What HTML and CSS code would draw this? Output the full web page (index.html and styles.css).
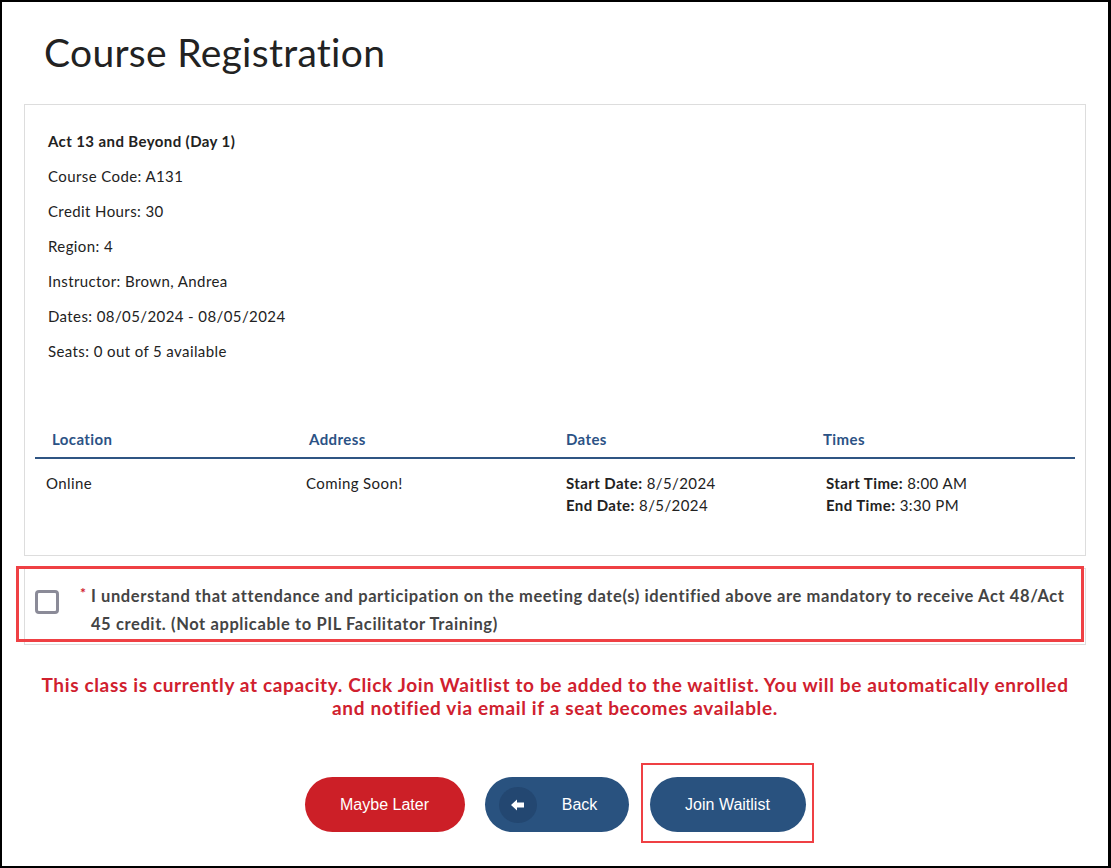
FILE: index.html
```html
<!DOCTYPE html>
<html lang="en">
<head>
  <meta charset="UTF-8">
  <meta name="viewport" content="width=device-width, initial-scale=1.0">
  <title>Course Registration</title>
  <link rel="stylesheet" href="styles.css">
</head>
<body>
  <div class="page">
    <h1>Course Registration</h1>

    <div class="card">
      <div class="info">
        <p class="course-name">Act 13 and Beyond (Day 1)</p>
        <p>Course Code: A131</p>
        <p>Credit Hours: 30</p>
        <p>Region: 4</p>
        <p>Instructor: Brown, Andrea</p>
        <p>Dates: 08/05/2024 - 08/05/2024</p>
        <p>Seats: 0 out of 5 available</p>
      </div>

      <table class="sessions">
        <colgroup>
          <col class="col">
          <col class="col">
          <col class="col">
          <col>
        </colgroup>
        <thead>
          <tr>
            <th>Location</th>
            <th>Address</th>
            <th>Dates</th>
            <th>Times</th>
          </tr>
        </thead>
        <tbody>
          <tr>
            <td>Online</td>
            <td>Coming Soon!</td>
            <td><b>Start Date:</b> 8/5/2024<br><b>End Date:</b> 8/5/2024</td>
            <td><b>Start Time:</b> 8:00 AM<br><b>End Time:</b> 3:30 PM</td>
          </tr>
        </tbody>
      </table>
    </div>

    <div class="agree">
      <label class="agree-row">
        <input type="checkbox" class="agree-check">
        <span class="req">*</span>
        <span class="agree-text">I understand that attendance and participation on the meeting date(s) identified above are mandatory to receive Act 48/Act 45 credit. (Not applicable to PIL Facilitator Training)</span>
      </label>
    </div>

    <p class="capacity">This class is currently at capacity. Click Join Waitlist to be added to the waitlist. You will be automatically enrolled and notified via email if a seat becomes available.</p>

    <div class="actions">
      <button class="btn btn-red">Maybe Later</button>
      <button class="btn btn-blue btn-back">
        <span class="back-icon">
          <svg width="14" height="12" viewBox="0 0 14 12"><path d="M0 6 L6 0.5 L6 3.5 L13 3.5 L13 8.5 L6 8.5 L6 11.5 Z" fill="#fff"/></svg>
        </span>
        <span class="back-label">Back</span>
      </button>
      <span class="focus-wrap">
        <button class="btn btn-blue">Join Waitlist</button>
      </span>
    </div>
  </div>
</body>
</html>
```

FILE: styles.css
```css
* { box-sizing: border-box; }
body { margin: 0; font-family: Lato, "Open Sans", Arial, sans-serif; color: #222; background: #fff; }
.page { height: 868px; border: 2px solid #000; border-right-width: 3px; padding: 0 22px; }

h1 { margin: 0; padding: 26px 0 0 20px; font-size: 39px; font-weight: 400; line-height: 48px; color: #222; letter-spacing: 0.3px; }

.card { margin-top: 28px; border: 1px solid #ddd; padding: 26px 10px 39px; }
.info { padding-left: 13px; }
.info p { margin: 0 0 15px; font-size: 15px; line-height: 20px; letter-spacing: 0.4px; }
.info .course-name { font-weight: 700; }
.info p:last-child { margin-bottom: 0; }

.sessions { width: 100%; margin-top: 68px; border-collapse: collapse; table-layout: fixed; font-size: 15px; letter-spacing: 0.4px; }
.sessions .col { width: 257px; }
.sessions th { text-align: left; color: #2b5285; font-weight: 700; padding: 0 0 8px 17px; border-bottom: 2px solid #2f5583; line-height: 20px; }
.sessions td { vertical-align: top; padding: 13px 0 0 11px; line-height: 22px; }
.sessions td:nth-child(2) { padding-left: 14px; }
.sessions td:nth-child(3) { padding-left: 17px; }
.sessions td:nth-child(4) { padding-left: 20px; }

.agree { position: relative; margin-top: 12px; border: 1px solid #ddd; padding: 13px 18px 6px 10px; }
.agree::after { content: ""; position: absolute; left: -9px; right: 1px; top: -3px; bottom: 2px; border: 3px solid #ef4044; pointer-events: none; }
.agree-row { display: flex; align-items: flex-start; }
.agree-check { appearance: none; flex: none; width: 24px; height: 24px; margin: 8px 21px 0 0; border: 3px solid #8b8b98; border-radius: 4px; background: #fff; }
.req { flex: none; color: #d0202e; font-size: 14px; font-weight: 700; line-height: 14px; margin: 4px 5px 0 0; }
.agree-text { font-size: 16.5px; font-weight: 700; line-height: 28px; color: #444; letter-spacing: 0.6px; }

.capacity { margin: 28px 0 0; padding: 0 10px; text-align: center; color: #d0202e; font-size: 19px; font-weight: 700; line-height: 23px; letter-spacing: 0.65px; }

.actions { display: flex; justify-content: center; align-items: flex-start; gap: 20px; margin-top: 44px; }
.btn { border: none; height: 55px; border-radius: 28px; color: #fff; font-family: "Liberation Sans", Arial, sans-serif; font-size: 16px; cursor: pointer; }
.btn-red { background: #cc1f27; width: 160px; margin-top: 14px; }
.btn-blue { background: #29527f; width: 156px; }
.btn-back { width: 144px; margin-top: 14px; display: flex; align-items: center; padding: 0 0 0 14px; }
.back-label { flex: 1; text-align: center; padding-right: 6px; }
.back-icon { width: 38px; height: 36px; border-radius: 50%; background: #234771; display: flex; align-items: center; justify-content: center; }
.focus-wrap { display: inline-flex; padding: 12px 6px 9px 7px; margin: 0 -8px; border: 2px solid #ef4044; }
```
